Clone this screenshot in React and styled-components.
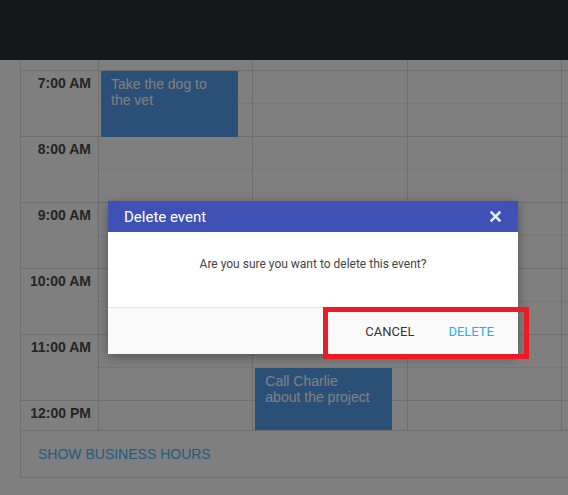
import React from 'react';
import styled, { createGlobalStyle } from 'styled-components';

const GlobalStyle = createGlobalStyle`
  html, body {
    margin: 0;
    padding: 0;
    overflow: hidden;
    background: #ffffff;
    font-family: Roboto, "Liberation Sans", Arial, sans-serif;
  }
`;

const Page = styled.div`
  position: relative;
  width: 568px;
  height: 495px;
  overflow: hidden;
`;

const TopBar = styled.div`
  height: 60px;
  background: #2c2e36;
`;

const Scheduler = styled.div`
  margin-left: 20px;
  width: 640px;
  border-left: 1px solid #dcdcdc;
  border-bottom: 1px solid #dcdcdc;
`;

const GridViewport = styled.div`
  height: 371px;
  overflow: hidden;
  border-bottom: 1px solid #dcdcdc;
  box-sizing: border-box;
`;

const HourRow = styled.div`
  display: grid;
  grid-template-columns: 78px repeat(4, 154.33px) 1fr;
  height: ${(p) => p.$height}px;
  border-bottom: 1px solid #dcdcdc;
`;

const TimeCell = styled.div`
  box-sizing: border-box;
  padding: 4px 7px 0 0;
  text-align: right;
  border-right: 1px solid #dcdcdc;
  font-family: "Liberation Sans", Arial, sans-serif;
  font-size: 14px;
  font-weight: bold;
  line-height: 16px;
  color: #4a4a4a;
`;

const DayCell = styled.div`
  position: relative;
  display: flex;
  flex-direction: column;
  border-right: 1px solid #dcdcdc;
`;

const HalfSlot = styled.div`
  height: 32px;
  border-bottom: ${(p) => (p.$top ? '1px dotted #dcdcdc' : 'none')};
`;

const EventBlock = styled.div`
  position: absolute;
  left: 2px;
  top: ${(p) => p.$top}px;
  width: 137px;
  height: ${(p) => p.$height}px;
  box-sizing: border-box;
  padding: 5px 20px 5px 10px;
  background: #54a0f0;
  color: #ffffff;
  font-family: "Liberation Sans", Arial, sans-serif;
  font-size: 14px;
  line-height: 16px;
  z-index: 1;
`;

const Footer = styled.div`
  display: flex;
  align-items: center;
  height: 46px;
  padding-left: 17px;
`;

const LinkButton = styled.span`
  font-family: "Liberation Sans", Arial, sans-serif;
  font-size: 14px;
  color: #3cbcff;
`;

const Backdrop = styled.div`
  position: absolute;
  inset: 0;
  background: rgba(0, 0, 0, 0.5);
  z-index: 5;
`;

const Dialog = styled.div`
  position: absolute;
  left: 108px;
  top: 201px;
  width: 410px;
  background: #ffffff;
  box-shadow: 0 3px 10px rgba(0, 0, 0, 0.35);
  z-index: 6;
`;

const DialogHeader = styled.div`
  display: flex;
  align-items: center;
  justify-content: space-between;
  height: 31px;
  padding: 0 17px 0 16px;
  background: #3f51b5;
  color: #ffffff;
  font-size: 15px;
`;

const CloseButton = styled.button`
  display: flex;
  padding: 0;
  border: none;
  background: none;
  cursor: pointer;
`;

const DialogBody = styled.div`
  box-sizing: border-box;
  height: 75px;
  padding-top: 24px;
  text-align: center;
  font-size: 12px;
  line-height: 16px;
  color: #444444;
`;

const DialogFooter = styled.div`
  display: flex;
  align-items: center;
  justify-content: flex-end;
  gap: 2px;
  height: 47px;
  padding: 0 8px;
  box-sizing: border-box;
  background: #fafafa;
  border-top: 1px solid #e4e4e4;
`;

const DialogButton = styled.button`
  padding: 8px 16px;
  border: none;
  background: none;
  font-family: Roboto, "Liberation Sans", Arial, sans-serif;
  font-size: 13px;
  text-transform: uppercase;
  color: ${(p) => (p.$primary ? '#1cb0f6' : '#333333')};
  cursor: pointer;
`;

const Highlight = styled.div`
  position: absolute;
  left: 323px;
  top: 307px;
  width: 206px;
  height: 52px;
  box-sizing: border-box;
  border: 5px solid #ed1c24;
  z-index: 7;
`;

const hours = ['7:00 AM', '8:00 AM', '9:00 AM', '10:00 AM', '11:00 AM', '12:00 PM'];
const days = [0, 1, 2, 3, 4];

const events = [
  { hour: '7:00 AM', day: 0, top: 0, height: 66, title: 'Take the dog to the vet' },
  { hour: '11:00 AM', day: 1, top: 33, height: 66, title: 'Call Charlie about the project' },
];

const App = () => (
  <Page>
    <GlobalStyle />
    <TopBar />
    <Scheduler>
      <GridViewport>
        {/* tail of the 6:30 slot, scrolled mostly out of view */}
        <HourRow $height={10}>
          <TimeCell />
          {days.map((day) => (
            <DayCell key={day} />
          ))}
        </HourRow>
        {hours.map((hour) => (
          <HourRow key={hour} $height={65}>
            <TimeCell>{hour}</TimeCell>
            {days.map((day) => (
              <DayCell key={day}>
                <HalfSlot $top />
                <HalfSlot />
                {events
                  .filter((ev) => ev.hour === hour && ev.day === day)
                  .map((ev) => (
                    <EventBlock key={ev.title} $top={ev.top} $height={ev.height}>
                      {ev.title}
                    </EventBlock>
                  ))}
              </DayCell>
            ))}
          </HourRow>
        ))}
      </GridViewport>
      <Footer>
        <LinkButton>SHOW BUSINESS HOURS</LinkButton>
      </Footer>
    </Scheduler>

    <Backdrop />
    <Dialog>
      <DialogHeader>
        <span>Delete event</span>
        <CloseButton aria-label="close">
          <svg width="11" height="11" viewBox="0 0 11 11">
            <path d="M1.5 1.5 L9.5 9.5 M9.5 1.5 L1.5 9.5" stroke="#e3e6f5" strokeWidth="2.6" strokeLinecap="square" />
          </svg>
        </CloseButton>
      </DialogHeader>
      <DialogBody>Are you sure you want to delete this event?</DialogBody>
      <DialogFooter>
        <DialogButton>Cancel</DialogButton>
        <DialogButton $primary>Delete</DialogButton>
      </DialogFooter>
    </Dialog>
    <Highlight />
  </Page>
);

export default App;
